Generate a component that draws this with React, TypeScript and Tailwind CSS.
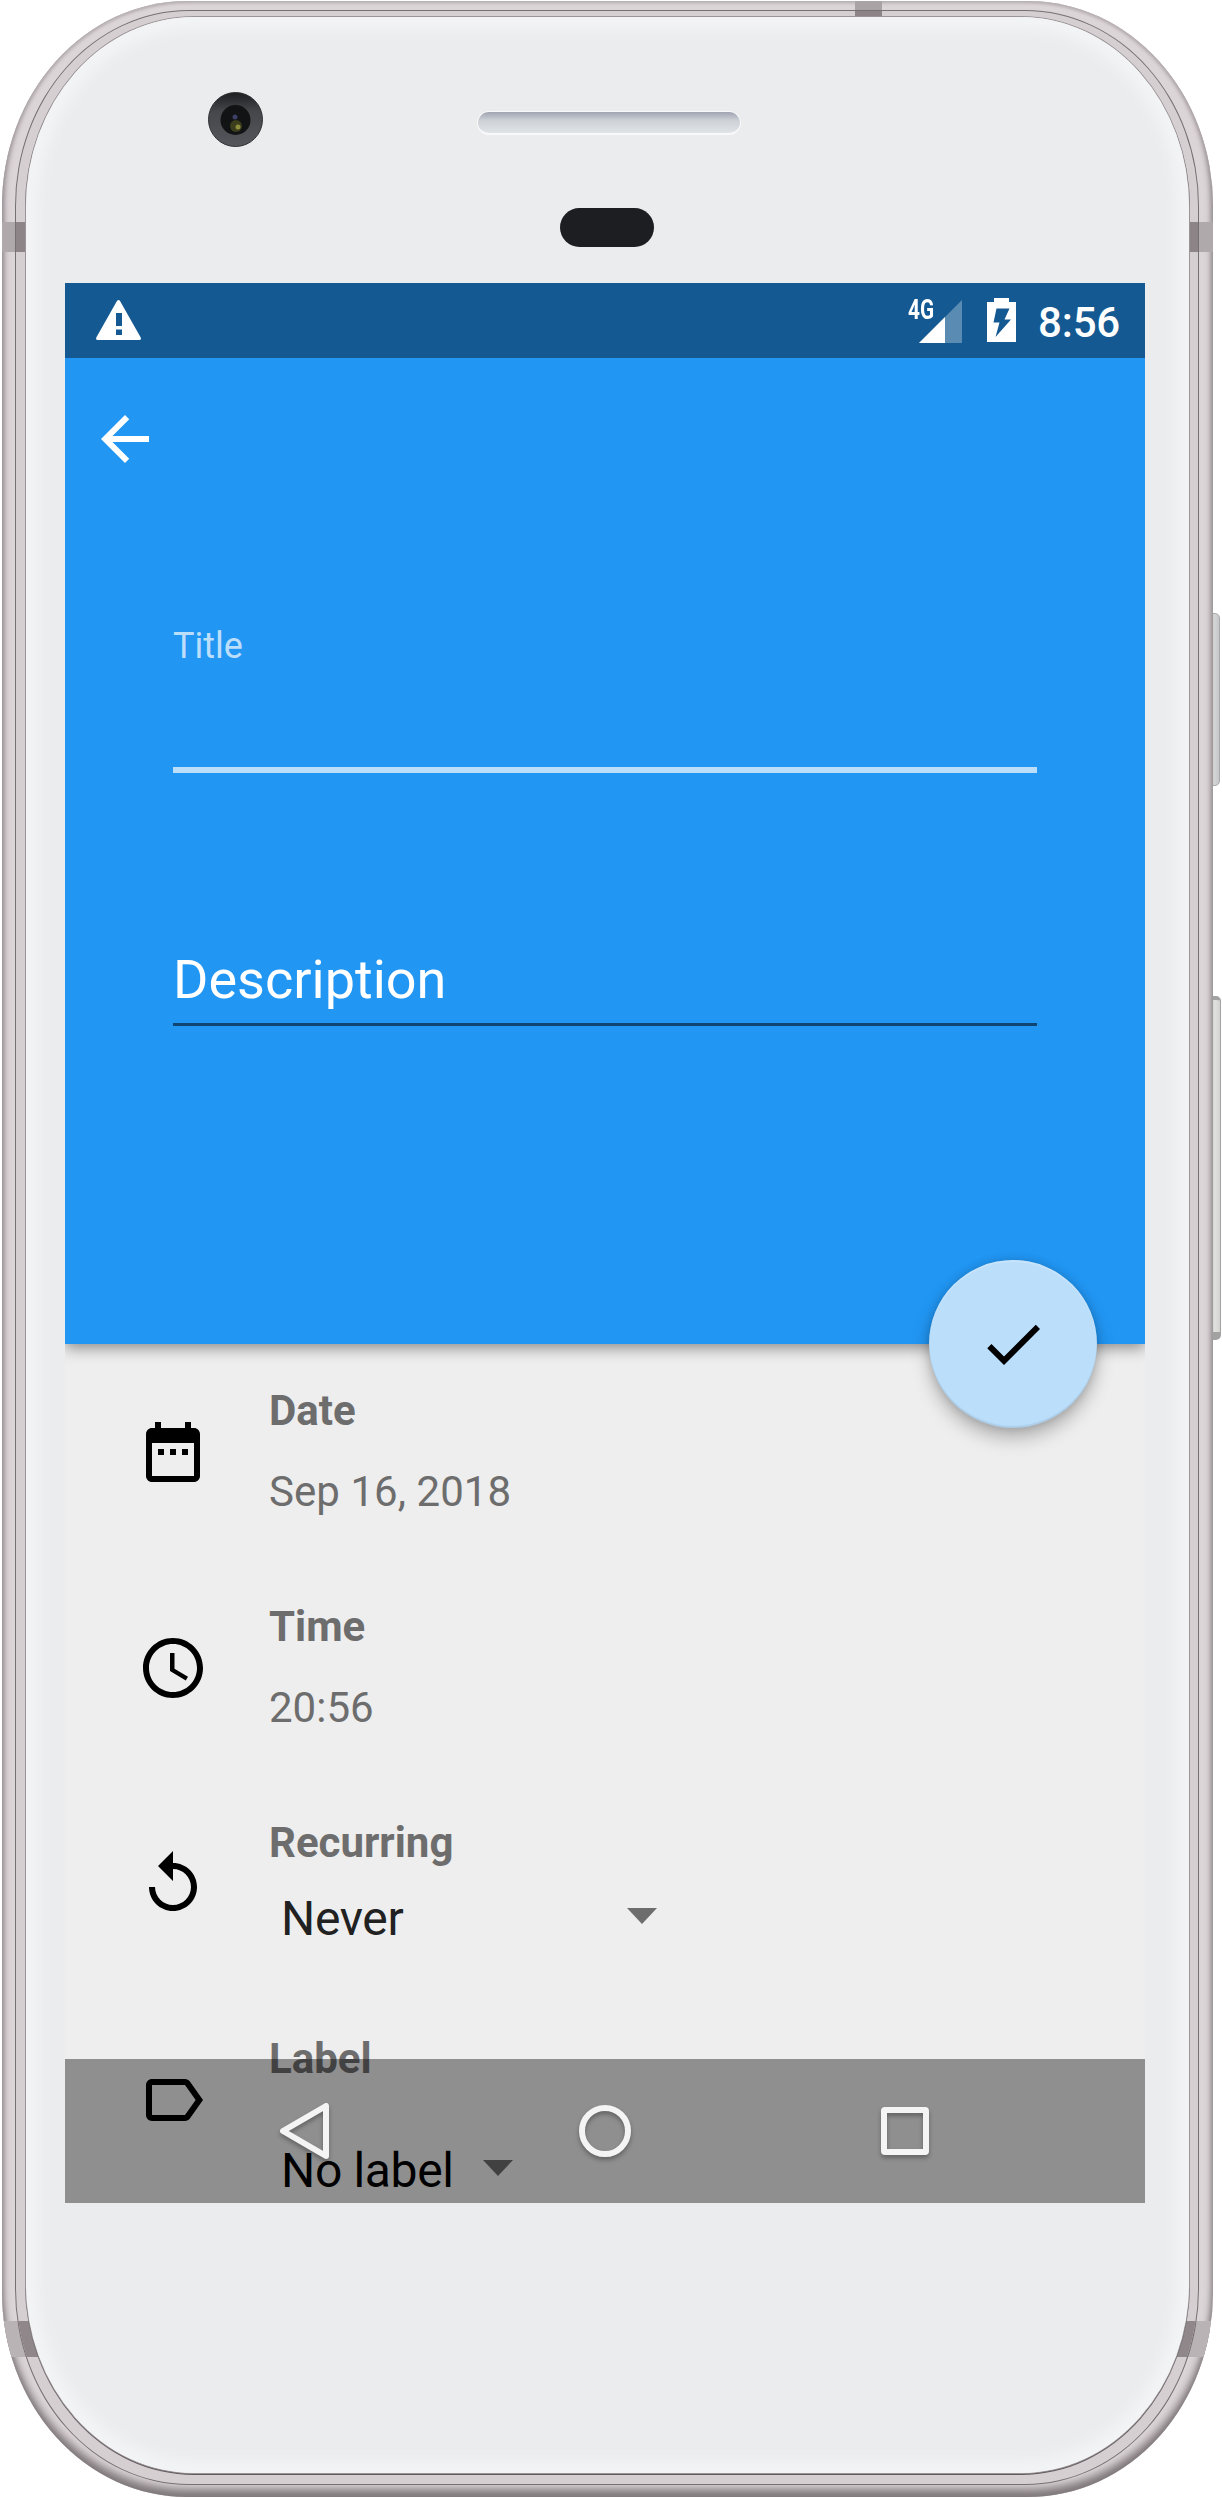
import type { ReactNode } from 'react';

function Icon({ d, className }: { d: string; className: string }) {
  return (
    <svg viewBox="0 0 24 24" fill="currentColor" className={className}>
      <path d={d} />
    </svg>
  );
}

const ICONS = {
  back: 'M20 11H7.83l5.59-5.59L12 4l-8 8 8 8 1.41-1.41L7.83 13H20v-2z',
  check: 'M9 16.17L4.83 12l-1.42 1.41L9 19 21 7l-1.41-1.41z',
  date: 'M9 11H7v2h2v-2zm4 0h-2v2h2v-2zm4 0h-2v2h2v-2zm2-7h-1V2h-2v2H8V2H6v2H5c-1.11 0-1.99.9-1.99 2L3 20c0 1.1.89 2 2 2h14c1.1 0 2-.9 2-2V6c0-1.1-.9-2-2-2zm0 16H5V9h14v11z',
  time: 'M11.99 2C6.47 2 2 6.48 2 12s4.47 10 9.99 10C17.52 22 22 17.52 22 12S17.52 2 11.99 2zM12 20c-4.42 0-8-3.58-8-8s3.58-8 8-8 8 3.58 8 8-3.58 8-8 8zm.5-13H11v6l5.25 3.15.75-1.23-4.5-2.67z',
  replay: 'M12 5V1L7 6l5 5V7c3.31 0 6 2.69 6 6s-2.69 6-6 6-6-2.69-6-6H4c0 4.42 3.58 8 8 8s8-3.58 8-8-3.58-8-8-8z',
  label: 'M17.63 5.84C17.27 5.33 16.67 5 16 5L5 5.01C3.9 5.01 3 5.9 3 7v10c0 1.1.9 1.99 2 1.99L16 19c.67 0 1.27-.33 1.63-.84L22 12l-4.37-6.16zM16 17H5V7h11l3.55 5L16 17z',
};

function StatusBar() {
  return (
    <div className="relative z-20 flex h-[75px] shrink-0 items-start bg-[#145992] pl-[31px] pr-[25px] pt-[15px] text-white">
      <svg viewBox="0 0 45 42" className="mt-[2px] h-[42px] w-[45px]">
        <path
          fillRule="evenodd"
          fill="white"
          d="M20.8 1.2Q22.5-1 24.2 1.2L44.7 37.5Q45.5 40 43.3 40H1.7Q-.5 40 .3 37.5ZM20 13V26H26V13ZM20 29.500V35H26V29.500Z"
        />
      </svg>
      <div className="relative ml-auto h-[45px] w-[54px]">
        <span className="absolute left-0 top-0 origin-left scale-x-[0.77] text-[27px] font-bold leading-[24px]">4G</span>
        <svg viewBox="0 0 43 43" className="absolute left-[11px] top-[2px] h-[43px] w-[43px]">
          <path d="M0 43L43 0V43Z" fill="white" fillOpacity=".3" />
          <path d="M0 43L26 17V43Z" fill="white" />
        </svg>
      </div>
      <svg viewBox="0 0 29 44" className="ml-[25px] h-[44px] w-[29px]">
        <path
          fillRule="evenodd"
          fill="white"
          d="M7 0H22V4H29V44H0V4H7ZM9.500 10.500L6.500 24.500H12.500L8.500 39L24 21.500H17.500L22.500 10.500Z"
        />
      </svg>
      <span className="ml-[22px] text-[42px] font-medium leading-[50px] tracking-[-0.2px]">8:56</span>
    </div>
  );
}

function Row({ icon, label, children }: { icon: string; label: string; children: ReactNode }) {
  return (
    <div className="flex h-[216px] shrink-0 items-start pl-[72px]">
      <Icon d={icon} className="mt-[72px] h-[72px] w-[72px] shrink-0 text-black" />
      <div className="ml-[60px] flex flex-col items-start pt-[42px]">
        <span className="text-[42px] font-bold leading-[50px] text-[#6d6d6d]">{label}</span>
        {children}
      </div>
    </div>
  );
}

function Arrow({ className }: { className: string }) {
  return (
    <svg viewBox="0 0 30 16" className={className}>
      <path d="M0 0H30L15 16Z" fill="#6d6d6d" />
    </svg>
  );
}

function NavBar() {
  return (
    <div className="absolute inset-x-0 bottom-0 flex h-[144px] bg-black/40">
      <svg viewBox="0 0 1080 144" className="h-[144px] w-[1080px] drop-shadow-[0_3px_2px_rgba(0,0,0,0.3)]">
        <g fill="none" stroke="#f4f4f4" strokeWidth="6" strokeLinejoin="round">
          <path d="M218 72L261 47V97Z" />
          <circle cx="540" cy="72" r="23" />
          <rect x="819" y="51" width="42" height="42" rx="1" />
        </g>
      </svg>
    </div>
  );
}

function Screen() {
  return (
    <div className="relative flex h-[1920px] w-[1080px] flex-col overflow-hidden bg-[#eeeeee]">
      <StatusBar />
      <div className="relative z-10 h-[986px] shrink-0 bg-[#2196f3] shadow-[0_4px_14px_rgba(0,0,0,0.42)]">
        <div className="flex h-full flex-col px-[108px]">
          <Icon d={ICONS.back} className="-ml-[84px] mt-[45px] h-[72px] w-[72px] shrink-0 text-white" />
          <span className="mt-[150px] text-[36px] leading-[42px] text-[#bbdefb]">Title</span>
          <div className="mt-[100px] h-[6px] shrink-0 bg-[#bbdefb]" />
          <span className="mt-[175px] text-[54px] leading-[64px] text-white">Description</span>
          <div className="mt-[11px] h-[3px] shrink-0 bg-[#0f4570]" />
        </div>
        <button className="absolute -bottom-[84px] right-[48px] flex h-[168px] w-[168px] items-center justify-center rounded-full bg-[#bbdefb] text-black shadow-[0_10px_18px_rgba(0,0,0,0.26),0_0_10px_rgba(0,0,0,0.14),inset_0_2px_1px_rgba(255,255,255,0.2),inset_0_-2px_1px_rgba(0,0,0,0.08)]">
          <Icon d={ICONS.check} className="h-[72px] w-[72px]" />
        </button>
      </div>
      <Row icon={ICONS.date} label="Date">
        <span className="mt-[31px] text-[42px] leading-[50px] tracking-[0.05px] text-[#6d6d6d]">Sep 16, 2018</span>
      </Row>
      <Row icon={ICONS.time} label="Time">
        <span className="mt-[31px] text-[42px] leading-[50px] text-[#6d6d6d]">20:56</span>
      </Row>
      <Row icon={ICONS.replay} label="Recurring">
        <div className="mt-[23px] flex w-[388px] items-start justify-between pl-[12px]">
          <span className="text-[48px] leading-[56px] tracking-[-0.35px] text-[#212121]">Never</span>
          <Arrow className="mt-[17px] h-[16px] w-[30px]" />
        </div>
      </Row>
      <Row icon={ICONS.label} label="Label">
        <div className="mt-[59px] flex w-[244px] items-start justify-between pl-[12px]">
          <span className="whitespace-nowrap text-[48px] leading-[56px] tracking-[-0.35px] text-black">No label</span>
          <Arrow className="mt-[17px] h-[16px] w-[30px] shrink-0" />
        </div>
      </Row>
      <NavBar />
    </div>
  );
}

function Forehead() {
  return (
    <div className="relative h-[266px] w-full">
      <svg viewBox="0 0 55 55" className="absolute left-[182px] top-[75px] h-[55px] w-[55px]">
        <defs>
          <linearGradient id="ring" x1="0" y1="0" x2="0" y2="1">
            <stop offset="0" stopColor="#1d1e20" />
            <stop offset=".35" stopColor="#46474b" />
            <stop offset="1" stopColor="#55565b" />
          </linearGradient>
        </defs>
        <circle cx="27.500" cy="27.500" r="27" fill="url(#ring)" stroke="#303134" />
        <circle cx="27.500" cy="28" r="15" fill="#121314" />
        <circle cx="28" cy="34" r="6" fill="#3b3d1c" />
        <circle cx="30" cy="35" r="2.500" fill="#8d8c3c" />
        <circle cx="27" cy="25" r="2.500" fill="#3c3f66" />
      </svg>
      <div className="absolute left-[451px] top-[94px] h-[24px] w-[264px] rounded-full border border-b-2 border-[#f8f9fa] bg-linear-to-b from-[#a0a4b2] via-[#cdd1d7] via-40% to-[#e0e3e6]" />
      <div className="absolute left-[534px] top-[191px] h-[39px] w-[94px] rounded-full bg-[#1c1e22]" />
    </div>
  );
}

export default function App() {
  return (
    <div className="relative h-[2498px] w-[1222px] overflow-hidden bg-white pl-[2px] pt-px font-['Roboto',sans-serif]">
      {/* side keys */}
      <div className="absolute left-[1208px] top-[613px] h-[173px] w-[12px] rounded-[5px] border border-[#a9aaa9] bg-linear-to-r from-[#8f8e8f] via-[#d5d7d7] to-[#c4c8c9]" />
      <div className="absolute left-[1208px] top-[996px] h-[344px] w-[13px] rounded-[5px] border border-b-8 border-t-4 border-[#a3a2a2] bg-linear-to-r from-[#aaa8a7] via-[#e0e1de] to-[#d3d5d1]" />

      {/* outer metal band */}
      <div className="relative h-[2496px] w-[1211px] overflow-hidden rounded-[185px/205px] bg-[#dcd5d8] pl-[13px] pt-[9px] shadow-[inset_0_-8px_8px_#80797c,inset_2px_0_4px_#b6afb1,inset_-2px_0_4px_#b6afb1,inset_0_2px_3px_#c1babd]">
        <div className="absolute left-0 top-[221px] h-[30px] w-full bg-[#b0a9ab]" />
        <div className="absolute left-0 top-[2320px] h-[36px] w-full bg-[#bab3b5]" />
        <div className="absolute left-[853px] top-0 h-[20px] w-[27px] bg-[#aaa3a5]" />
        {/* inner metal band */}
        <div className="relative h-[2475px] w-[1184px] overflow-hidden rounded-[174px/196px] border border-[#777073] bg-[#d6cfd2] pl-[10px] pt-[6px]">
          <div className="absolute left-0 top-[211px] h-[30px] w-full bg-[#8c8487]" />
          <div className="absolute left-0 top-[2310px] h-[36px] w-full bg-[#8f878a]" />
          <div className="absolute left-[839px] top-0 h-[20px] w-[27px] bg-[#8c8487]" />
          {/* glass face */}
          <div className="relative flex h-[2456px] w-[1163px] flex-col rounded-[168px/190px] bg-[#ebecee] shadow-[0_0_0_1px_#9b9497,0_1px_0_1px_#625b5e,inset_0_0_14px_12px_#f3f4f5]">
            <Forehead />
            <div className="pl-[39px]">
              <Screen />
            </div>
          </div>
        </div>
      </div>
    </div>
  );
}
